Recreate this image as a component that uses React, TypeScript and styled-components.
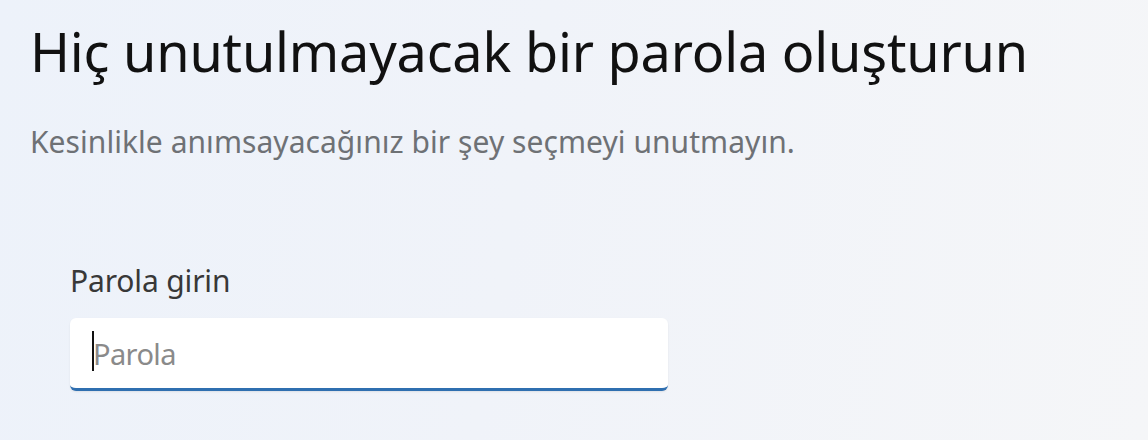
import React from 'react'
import styled, { createGlobalStyle } from 'styled-components'

const GlobalStyle = createGlobalStyle`
  html, body {
    margin: 0;
    padding: 0;
  }
  body {
    width: 1148px;
    height: 440px;
    overflow: hidden;
    font-family: "Noto Sans", "Open Sans", sans-serif;
  }
`

const Page = styled.div`
  box-sizing: border-box;
  width: 1148px;
  height: 440px;
  padding: 15px 0 0 30px;
  background: linear-gradient(100deg, #edf2fa 0%, #f0f3f9 45%, #f5f6f8 100%);
  display: flex;
  flex-direction: column;
`

const Title = styled.h1`
  margin: 0;
  font-size: 54px;
  font-weight: 400;
  line-height: 72px;
  color: #111;
  letter-spacing: -0.2px;
`

const Subtitle = styled.p`
  margin: 35px 0 0;
  font-size: 30px;
  line-height: 40px;
  color: #6e7175;
  letter-spacing: 0.05px;
`

const Field = styled.div`
  margin: 99px 0 0 40px;
  display: flex;
  flex-direction: column;
  gap: 17px;
  width: 598px;
`

const Label = styled.label`
  font-size: 30px;
  line-height: 40px;
  color: #383838;
  letter-spacing: -0.15px;
`

const Box = styled.div`
  box-sizing: border-box;
  height: 73px;
  background: #fff;
  border-radius: 6px;
  border-bottom: 3px solid #2f6fb0;
  box-shadow: 0 1px 2px rgba(0, 0, 0, 0.08);
  display: flex;
  align-items: center;
  padding: 0 0 0 22px;
`

const Caret = styled.span`
  width: 2px;
  height: 40px;
  background: #111;
  margin: -4px -1px 0 0;
`

const Placeholder = styled.span`
  font-size: 29px;
  color: #8a8a8a;
  letter-spacing: -0.6px;
`

export default function App() {
  return (
    <>
      <GlobalStyle />
      <Page>
        <Title>Hiç unutulmayacak bir parola oluşturun</Title>
        <Subtitle>Kesinlikle anımsayacağınız bir şey seçmeyi unutmayın.</Subtitle>
        <Field>
          <Label>Parola girin</Label>
          <Box>
            <Caret />
            <Placeholder>Parola</Placeholder>
          </Box>
        </Field>
      </Page>
    </>
  )
}
